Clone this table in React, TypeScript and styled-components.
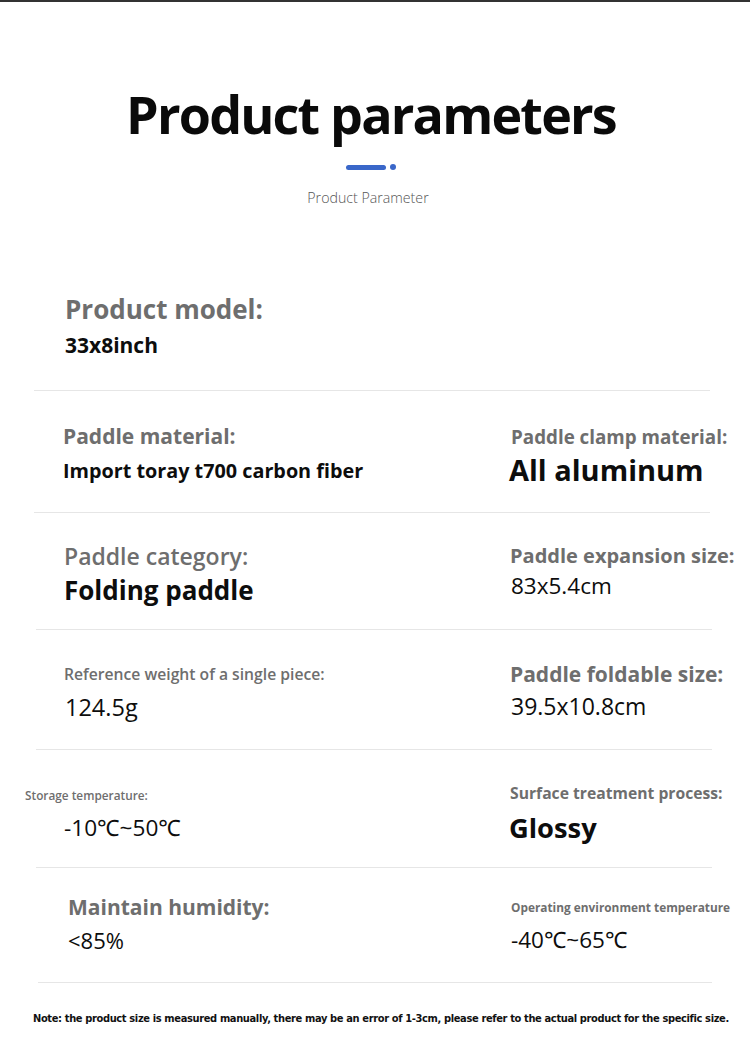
import styled, { createGlobalStyle } from 'styled-components';

let Global = createGlobalStyle`
  body {
    margin: 0;
    background: #fff;
    font-family: 'Open Sans', 'Noto Sans', sans-serif;
  }
`;

let Page = styled.div`
  width: 750px;
  height: 1055px;
  border-top: 2px solid #333;
  box-sizing: border-box;
  overflow: hidden;
  display: flex;
  flex-direction: column;
`;

let Header = styled.header`
  display: flex;
  flex-direction: column;
  align-items: center;
  padding-right: 8px;
`;

let Title = styled.h1`
  margin: 86px 0 0;
  font-size: 52px;
  line-height: 1;
  font-weight: 700;
  letter-spacing: -1.8px;
  color: #0a0a0a;
`;

let Deco = styled.div`
  display: flex;
  align-items: center;
  gap: 4px;
  margin-top: 24px;
`;

let Bar = styled.span`
  width: 40px;
  height: 5px;
  border-radius: 3px;
  background: #3a67c9;
`;

let Dot = styled.span`
  width: 6px;
  height: 6px;
  border-radius: 50%;
  background: #3a67c9;
`;

let Subtitle = styled.div`
  margin: 21px 6px 0 0;
  font-size: 14.2px;
  line-height: 1;
  font-weight: 300;
  color: #555;
`;

let Table = styled.section`
  margin-top: 56px;
  display: flex;
  flex-direction: column;
`;

let Row = styled.div<{ $h: number }>`
  display: grid;
  grid-template-columns: 510px 1fr;
  height: ${(p) => p.$h}px;
`;

let Cell = styled.div<{ $x: number; $top: number; $gap: number }>`
  display: flex;
  flex-direction: column;
  align-items: flex-start;
  padding-left: ${(p) => p.$x}px;
  padding-top: ${(p) => p.$top}px;
  gap: ${(p) => p.$gap}px;
`;

let Label = styled.div<{ $size: number; $weight: number; $shift?: number }>`
  font-size: ${(p) => p.$size}px;
  font-weight: ${(p) => p.$weight};
  line-height: 1;
  color: #6e6e6e;
  white-space: nowrap;
  margin-left: ${(p) => p.$shift ?? 0}px;
`;

let Value = styled.div<{ $size: number; $weight: number; $shift?: number }>`
  font-size: ${(p) => p.$size}px;
  font-weight: ${(p) => p.$weight};
  line-height: 1;
  color: #0d0d0d;
  white-space: nowrap;
  margin-left: ${(p) => p.$shift ?? 0}px;
`;

let Divider = styled.hr<{ $l: number; $r: number }>`
  border: 0;
  height: 1px;
  background: #e6e6e6;
  margin: 0 ${(p) => p.$r}px 0 ${(p) => p.$l}px;
`;

let Note = styled.p`
  margin: 30px 0 0 33px;
  font-family: 'DejaVu Sans Condensed', 'Liberation Sans', sans-serif;
  font-size: 11px;
  font-weight: 700;
  line-height: 1;
  color: #111;
  letter-spacing: -0.36px;
  white-space: nowrap;
`;

type Spec = {
  x: number;
  top: number;
  gap: number;
  label: string;
  ls: number;
  lw?: number;
  shift?: number;
  value: string;
  vs: number;
  vw?: number;
  vshift?: number;
};

type RowSpec = { h: number; l: number; r: number; left: Spec; right?: Spec };

// left x is measured from the page edge, right x from the 510px column line
let rows: RowSpec[] = [
  {
    h: 129, l: 34, r: 40,
    left: { x: 65, top: 35, gap: 13, label: 'Product model:', ls: 26, value: '33x8inch', vs: 21, vw: 700 }
  },
  {
    h: 121, l: 34, r: 40,
    left: { x: 63, top: 35, gap: 14, label: 'Paddle material:', ls: 21, value: 'Import toray t700 carbon fiber', vs: 19.8, vw: 700 },
    right: { x: 1, top: 37, gap: 8, label: 'Paddle clamp material:', ls: 18.8, value: 'All aluminum', vs: 29, vw: 700, vshift: -2 }
  },
  {
    h: 116, l: 36, r: 38,
    left: { x: 64, top: 32, gap: 9, label: 'Paddle category:', ls: 23, lw: 600, value: 'Folding paddle', vs: 26, vw: 700 },
    right: { x: 0, top: 33, gap: 9, label: 'Paddle expansion size:', ls: 20, value: '83x5.4cm', vs: 22.5, vw: 400, vshift: 1 }
  },
  {
    h: 119, l: 36, r: 38,
    left: { x: 64, top: 37, gap: 13, label: 'Reference weight of a single piece:', ls: 15.7, lw: 600, value: '124.5g', vs: 23.5, vw: 400, vshift: 1 },
    right: { x: 0, top: 34, gap: 10, label: 'Paddle foldable size:', ls: 21, value: '39.5x10.8cm', vs: 23, vw: 400, vshift: 1 }
  },
  {
    h: 117, l: 36, r: 38,
    left: { x: 64, top: 40, gap: 15, label: 'Storage temperature:', ls: 11.8, lw: 600, shift: -39, value: '-10℃~50℃', vs: 22.6, vw: 400 },
    right: { x: 0, top: 36, gap: 12, label: 'Surface treatment process:', ls: 15.7, value: 'Glossy', vs: 27.3, vw: 700, vshift: -1 }
  },
  {
    h: 114, l: 38, r: 38,
    left: { x: 68, top: 29, gap: 11, label: 'Maintain humidity:', ls: 21, value: '<85%', vs: 22, vw: 400 },
    right: { x: 1, top: 34, gap: 15, label: 'Operating environment temperature', ls: 11.85, value: '-40℃~65℃', vs: 22.5, vw: 400 }
  }
];

function ParamCell({ spec }: { spec?: Spec }) {
  if (!spec) return <div />;
  return (
    <Cell $x={spec.x} $top={spec.top} $gap={spec.gap}>
      <Label $size={spec.ls} $weight={spec.lw ?? 700} $shift={spec.shift}>
        {spec.label}
      </Label>
      <Value $size={spec.vs} $weight={spec.vw ?? 700} $shift={spec.vshift}>
        {spec.value}
      </Value>
    </Cell>
  );
}

export default function App() {
  return (
    <Page>
      <Global />
      <Header>
        <Title>Product parameters</Title>
        <Deco>
          <Bar />
          <Dot />
        </Deco>
        <Subtitle>Product Parameter</Subtitle>
      </Header>

      <Table>
        {rows.map((row, i) => (
          <div key={i}>
            <Row $h={row.h}>
              <ParamCell spec={row.left} />
              <ParamCell spec={row.right} />
            </Row>
            <Divider $l={row.l} $r={row.r} />
          </div>
        ))}
      </Table>

      <Note>
        Note: the product size is measured manually, there may be an error of 1-3cm, please refer to the actual product
        for the specific size.
      </Note>
    </Page>
  );
}
